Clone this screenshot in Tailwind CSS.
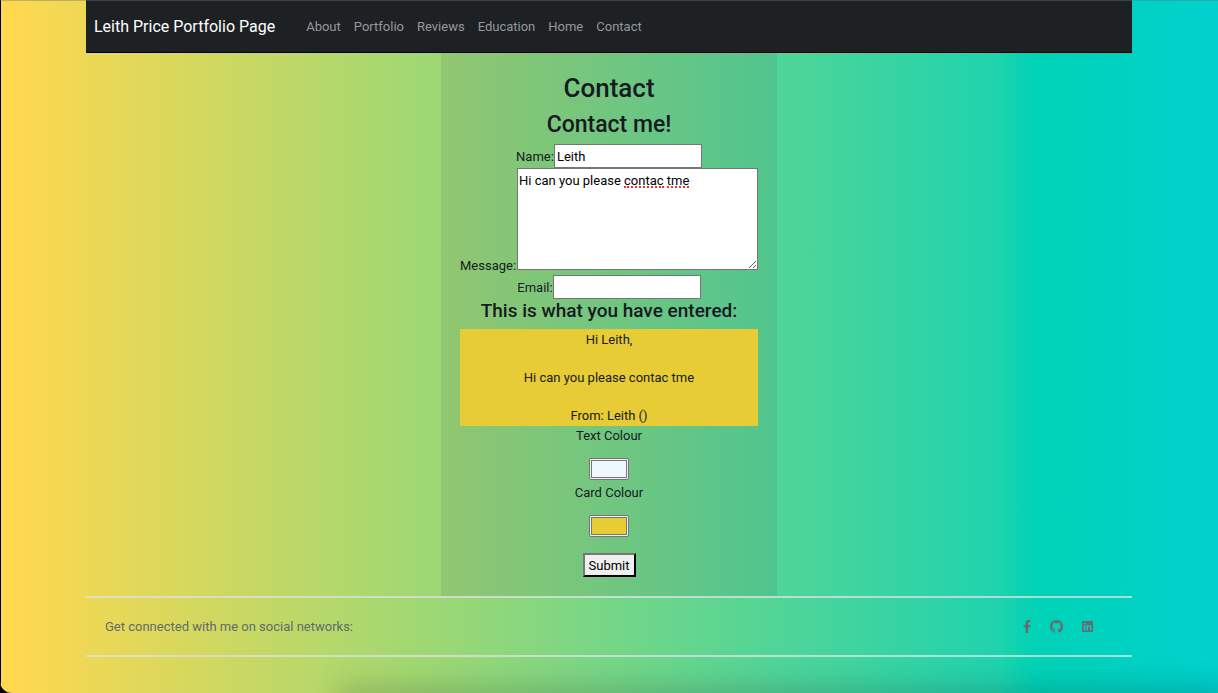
<!DOCTYPE html>
<html lang="en">
<head>
<meta charset="utf-8">
<meta name="viewport" content="width=device-width, initial-scale=1">
<title>Leith Price Portfolio Page</title>
<script src="https://cdn.jsdelivr.net/npm/@tailwindcss/browser@4"></script>
</head>
<body class="bg-black font-['Roboto',sans-serif] text-[13px] leading-[19px] text-[#171a22]">
<div class="relative min-h-screen overflow-hidden rounded-bl-xl bg-[linear-gradient(90deg,#ffd84f_0%,#ffd84f_1%,#a1d872_34%,#50d598_64%,#1fd3ae_82%,#00d2b6_85%,#00d1ce_100%)]">
  <div class="mx-auto max-w-[1046px]">
    <nav class="flex h-[53px] items-center border-b border-black bg-[#1e2124] px-2 pt-px" aria-label="Main">
      <a href="#" class="mr-[31px] text-base text-white">Leith Price Portfolio Page</a>
      <ul class="flex gap-[13px] text-[#96989a]">
        <li><a href="#about">About</a></li>
        <li><a href="#portfolio">Portfolio</a></li>
        <li><a href="#reviews">Reviews</a></li>
        <li><a href="#education">Education</a></li>
        <li><a href="#home">Home</a></li>
        <li><a href="#contact">Contact</a></li>
      </ul>
    </nav>
    <main class="mx-auto w-[336px] bg-[#555]/12 px-[19px] pt-5 pb-[19px] text-center">
      <h1 class="mb-[7px] text-[26px] leading-[31px] font-medium">Contact</h1>
      <h2 class="mb-[6px] text-[23px] leading-[27px] font-medium">Contact me!</h2>
      <form class="flex flex-col items-center">
        <div class="flex items-center">
          <label for="name">Name:</label>
          <input id="name" type="text" value="Leith" class="h-6 w-[148px] border border-[#767676] bg-white px-0.5 text-black">
        </div>
        <div class="flex w-full items-end justify-between">
          <label for="message">Message:</label>
          <div class="relative mb-[5px]">
            <textarea id="message" spellcheck="false" class="block h-[102px] w-[241px] resize border border-[#767676] bg-white px-px py-0.5 text-black">Hi can you please contac tme</textarea>
            <span class="absolute top-[18px] left-[107px] w-10 border-b-2 border-dotted border-red-500"></span>
            <span class="absolute top-[18px] left-[150px] w-[22px] border-b-2 border-dotted border-red-500"></span>
          </div>
        </div>
        <div class="flex items-center">
          <label for="email">Email:</label>
          <input id="email" type="text" class="h-6 w-[148px] border border-[#767676] bg-white px-0.5 text-black">
        </div>
        <h3 class="mb-[7px] text-[19px] leading-[23px] font-medium">This is what you have entered:</h3>
        <div class="w-full bg-[#e7cc35] py-px">
          <p>Hi Leith,</p>
          <p class="my-[19px]">Hi can you please contac tme</p>
          <p>From: Leith ()</p>
        </div>
        <label for="text-colour" class="mb-[13px]">Text Colour</label>
        <input id="text-colour" type="color" value="#f0f8ff" class="mb-[3px] h-[22px] w-10 rounded-xs border border-[#767676] bg-[#efefef] p-px [&::-webkit-color-swatch]:border [&::-webkit-color-swatch]:border-[#777] [&::-webkit-color-swatch-wrapper]:p-0">
        <label for="card-colour" class="mb-[13px]">Card Colour</label>
        <input id="card-colour" type="color" value="#e7cc35" class="mb-4 h-[22px] w-10 rounded-xs border border-[#767676] bg-[#efefef] p-px [&::-webkit-color-swatch]:border [&::-webkit-color-swatch]:border-[#777] [&::-webkit-color-swatch-wrapper]:p-0">
        <button type="submit" class="h-6 border-2 border-t-[#767676] border-r-black border-b-black border-l-[#767676] bg-[#efefef] px-1 text-black">Submit</button>
      </form>
    </main>
    <footer class="flex items-center justify-between border-y-2 border-[#dee2e6]/75 py-[18px] pr-[39px] pl-[19px]">
      <span class="py-px text-[#5f6b6d]">Get connected with me on social networks:</span>
      <div class="flex items-center gap-[19px] text-[#676a70]">
        <a href="#facebook" aria-label="Facebook"><svg class="h-[13px] w-2" viewBox="0 0 320 512" fill="currentColor"><path d="M279.14 288l14.22-92.66h-88.91v-60.13c0-25.35 12.42-50.06 52.24-50.06h40.42V6.26S260.43 0 225.36 0c-73.22 0-121.08 44.38-121.08 124.72v70.62H22.89V288h81.39v224h100.17V288z"/></svg></a>
        <a href="#github" aria-label="GitHub"><svg class="h-[13px] w-[13px]" viewBox="0 0 16 16" fill="currentColor"><path d="M8 0C3.58 0 0 3.58 0 8c0 3.54 2.29 6.53 5.47 7.59.4.07.55-.17.55-.38 0-.19-.01-.82-.01-1.49-2.01.37-2.53-.49-2.69-.94-.09-.23-.48-.94-.82-1.13-.28-.15-.68-.52-.01-.53.63-.01 1.08.58 1.23.82.72 1.21 1.87.87 2.33.66.07-.52.28-.87.51-1.07-1.78-.2-3.64-.89-3.64-3.95 0-.87.31-1.59.82-2.15-.08-.2-.36-1.02.08-2.12 0 0 .67-.21 2.2.82.64-.18 1.32-.27 2-.27s1.36.09 2 .27c1.53-1.04 2.2-.82 2.2-.82.44 1.1.16 1.92.08 2.12.51.56.82 1.27.82 2.15 0 3.07-1.87 3.75-3.65 3.95.29.25.54.73.54 1.48 0 1.07-.01 1.93-.01 2.2 0 .21.15.46.55.38A8.01 8.01 0 0 0 16 8c0-4.42-3.58-8-8-8z"/></svg></a>
        <a href="#linkedin" aria-label="LinkedIn"><svg class="h-[13px] w-[11px]" viewBox="0 0 448 512" fill="currentColor"><path d="M416 32H31.9C14.3 32 0 46.5 0 64.3v383.4C0 465.5 14.3 480 31.9 480H416c17.6 0 32-14.5 32-32.3V64.3c0-17.8-14.4-32.3-32-32.3zM135.4 416H69V202.2h66.5V416zm-33.2-243c-21.3 0-38.5-17.3-38.5-38.5S80.9 96 102.2 96c21.2 0 38.5 17.3 38.5 38.5 0 21.3-17.2 38.5-38.5 38.5zm282.1 243h-66.4V312c0-24.8-.5-56.7-34.5-56.7-34.6 0-39.9 27-39.9 54.9V416h-66.4V202.2h63.7v29.2h.9c8.9-16.8 30.6-34.5 62.9-34.5 67.2 0 79.7 44.3 79.7 101.9V416z"/></svg></a>
      </div>
    </footer>
  </div>
  <div class="absolute inset-y-0 left-0 w-px bg-black"></div>
  <div class="absolute inset-x-0 top-0 h-px bg-gray-500/40"></div>
  <div class="absolute right-0 bottom-0 left-[350px] h-0 shadow-[0_8px_28px_14px_rgb(0_0_0/0.18)]"></div>
</div>
</body>
</html>
